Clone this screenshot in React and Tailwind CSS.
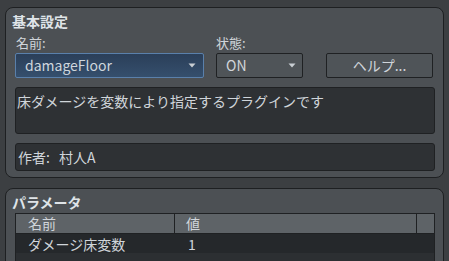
import React from "react";

const font = { fontFamily: '"Noto Sans CJK JP", "Noto Sans", sans-serif' };

function Arrow() {
  return (
    <svg width="8" height="5" viewBox="0 0 8 5" className="shrink-0">
      <path d="M0.5 0.5 L7.5 0.5 L4 4.5 Z" fill="#c9ced3" />
    </svg>
  );
}

export default function App() {
  return (
    <div
      className="w-[449px] h-[261px] overflow-hidden bg-[#3c3f42] pt-[7px] px-[5px] text-[#d0d5da]"
      style={font}
    >
      {/* Panel 1 */}
      <div className="rounded-[8px] border border-[#1e2022] bg-[#4c5054] pl-[9px] pr-[8px] pt-[3px] pb-[6px]">
        <div className="mt-[1px] ml-[-3px] text-[14px] font-bold leading-[18px] text-[#dfe4e8]">
          基本設定
        </div>
        <div className="mt-[5px] flex text-[13px] leading-[16px]">
          <div className="w-[201px] pl-[1px]">名前:</div>
          <div>状態:</div>
        </div>
        <div className="mt-[2px] flex h-[25px]">
          <div className="flex w-[189px] items-center justify-between rounded-[2px] border border-[#5a80ab] bg-gradient-to-b from-[#2b3f59] to-[#354f6d] pl-[9px] pr-[7px] text-[14px] text-[#cfd6dd]">
            <span>damageFloor</span>
            <Arrow />
          </div>
          <div className="ml-[12px] flex w-[87px] items-center justify-between rounded-[2px] border border-[#1f2123] bg-[#4f5458] pl-[9px] pr-[6px] text-[14px]">
            <span>ON</span>
            <Arrow />
          </div>
          <div className="ml-[23px] flex w-[107px] items-center justify-center rounded-[2px] border border-[#1f2123] bg-[#4f5458] text-[14px]">
            ヘルプ...
          </div>
        </div>
        <div className="mt-[9px] h-[47px] rounded-[3px] border border-[#1f2123] bg-[#2e3134] pl-[1px] pt-[3px] text-[14px] leading-[20px]">
          床ダメージを変数により指定するプラグインです
        </div>
        <div className="mt-[9px] flex h-[28px] items-center rounded-[3px] border border-[#1f2123] bg-[#2e3134] pl-[2px] text-[14px]">
          <span>作者:</span>
          <span className="ml-[9px]">村人A</span>
        </div>
      </div>

      {/* Panel 2 */}
      <div className="mt-[10px] h-[120px] rounded-[8px] border border-[#1e2022] bg-[#4c5054] pl-[9px] pr-[8px] pt-[4px]">
        <div className="ml-[-3px] text-[14px] font-bold leading-[18px] text-[#dfe4e8]">
          パラメータ
        </div>
        <div className="mt-[2px] border border-[#1f2123] text-[14px]">
          <div className="flex h-[19px] items-center bg-[#5e6367] leading-[19px]">
            <div className="w-[159px] h-full border-r border-[#1f2123] pl-[12px]">名前</div>
            <div className="w-[242px] h-full border-r border-[#1f2123] pl-[11px]">値</div>
            <div className="flex-1 h-full" />
          </div>
          <div className="flex h-[20px] items-center border-t border-[#1f2123] bg-[#25282b] leading-[20px]">
            <div className="w-[159px] pl-[12px]">ダメージ床変数</div>
            <div className="pl-[13px]">1</div>
          </div>
          <div className="h-[20px] bg-[#2c2f32]" />
          <div className="h-[20px] bg-[#25282b]" />
        </div>
      </div>
    </div>
  );
}
